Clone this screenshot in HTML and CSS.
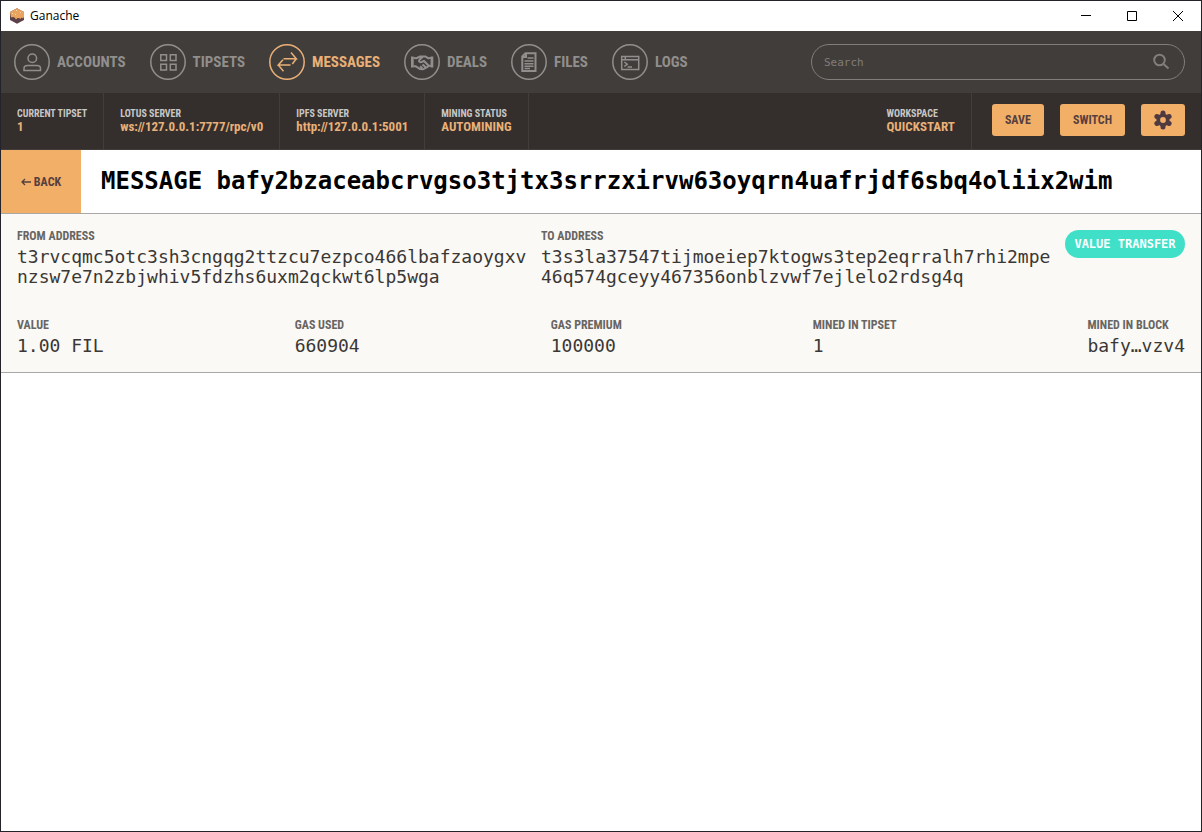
FILE: index.html
```html
<!DOCTYPE html>
<html lang="en">
<head>
<meta charset="utf-8">
<meta name="viewport" content="width=device-width, initial-scale=1">
<title>Ganache</title>
<link rel="stylesheet" href="styles.css">
</head>
<body>
<div class="window">
  <header class="titlebar">
    <svg class="app-icon" viewBox="0 0 16 16" aria-hidden="true">
      <path fill="#5b4048" d="M1 4 8 .3l7 3.700v8l-7 3.700-7-3.700z"/>
      <path fill="#e9a45f" d="M1 4 8 .3l7 3.700v5l-1 1.500-1.500-1-1 1.500-1.500-1-1.500 0-1.500 1.500-1.500-2-1.500-.5-2 .5z"/>
      <path fill="#f8d9b0" d="M3 5h1v1H3zM6 6h1v1H6zM11 4h1v1h-1zM7 2h1v1H7z"/>
    </svg>
    <span class="app-name">Ganache</span>
    <div class="window-controls">
      <button type="button" aria-label="Minimize"><svg viewBox="0 0 12 12"><path d="M1 5.500h10"/></svg></button>
      <button type="button" aria-label="Maximize"><svg viewBox="0 0 12 12"><path d="M1.500 1.500h9v9h-9z"/></svg></button>
      <button type="button" aria-label="Close"><svg viewBox="0 0 12 12"><path d="m1 1 10 10M11 1 1 11"/></svg></button>
    </div>
  </header>

  <div class="navbar">
    <nav class="nav">
      <a class="nav-item" href="#accounts">
        <svg viewBox="0 0 36 36"><circle cx="18" cy="18" r="17.200"/><circle cx="18.300" cy="14.300" r="4.300"/><path d="M10 26.500v-2c0-2 1.500-3 3.500-3h9.500c2 0 3.500 1 3.500 3v2z"/></svg>
        <span>ACCOUNTS</span></a>
      <a class="nav-item" href="#tipsets">
        <svg viewBox="0 0 36 36"><circle cx="18" cy="18" r="17.200"/><path d="M10.800 10.800h5.700v5.700h-5.700zM20.300 10.800H26v5.700h-5.700zM10.800 20.300h5.700V26h-5.700zM20.300 20.300H26V26h-5.700z"/></svg>
        <span>TIPSETS</span></a>
      <a class="nav-item active" href="#messages" aria-current="page">
        <svg viewBox="0 0 36 36"><circle cx="18" cy="18" r="17.200"/><path d="M14.500 14.700h12.800L22 8.500M27.300 14.700l-4 5.300M21.500 21H9.300l4.700-5.300M9.300 21l5.200 6.200"/></svg>
        <span>MESSAGES</span></a>
      <a class="nav-item" href="#deals">
        <svg viewBox="0 0 36 36"><circle cx="18" cy="18" r="17.200"/><path class="bold" d="m9.500 14 3 .2 3.500-1.700h5.500l2.500 1.700 3-.2M9.500 22l2.500.5 4 2.500 3 .3 4.500-2.300 1.500-1.500 2 .5M18.500 13l-3 2.800c-1.200 1.500 0 2.700 2 2.200l2.500-1 4.500 4.500M16 22.300l2.500 1.700M18.500 20.500l3 2.500"/><path class="fill" d="M7 12.500h2.700v11H7zM26.600 12.500h2.700v11h-2.700z"/></svg>
        <span>DEALS</span></a>
      <a class="nav-item" href="#files">
        <svg viewBox="0 0 36 36"><circle cx="18" cy="18" r="17.200"/><path class="bold" d="M14.500 9.300h10v17.700H11.300V12.500zM11.300 13h3.700V9.300"/><path d="M16.500 14h6M13.500 17h9M13.500 19.700h9M13.500 22.200h9M13.500 24.600h5.500"/></svg>
        <span>FILES</span></a>
      <a class="nav-item" href="#logs">
        <svg viewBox="0 0 36 36"><circle cx="18" cy="18" r="17.200"/><path d="M9.700 12.500h17v13h-17zM9.700 15.700h17M13.300 12.500v3M12.300 18l3 2.200-3 2.300M15.500 23h4.500"/></svg>
        <span>LOGS</span></a>
    </nav>
    <form class="search" role="search">
      <input type="text" placeholder="Search" aria-label="Search">
      <button type="submit" aria-label="Submit search"><svg viewBox="0 0 18 18"><circle cx="7.500" cy="7" r="5.300"/><path d="m11.500 11 5 4.500"/></svg></button>
    </form>
  </div>

  <div class="statusbar">
    <dl class="status-list">
      <div class="status"><dt>CURRENT TIPSET</dt><dd>1</dd></div>
      <div class="status"><dt>LOTUS SERVER</dt><dd>ws://127.0.0.1:7777/rpc/v0</dd></div>
      <div class="status"><dt>IPFS SERVER</dt><dd>http://127.0.0.1:5001</dd></div>
      <div class="status"><dt>MINING STATUS</dt><dd>AUTOMINING</dd></div>
      <div class="status workspace"><dt>WORKSPACE</dt><dd>QUICKSTART</dd></div>
    </dl>
    <div class="actions">
      <button type="button">SAVE</button>
      <button type="button">SWITCH</button>
      <button type="button" aria-label="Settings"><svg viewBox="0 0 18 18"><g><circle cx="9" cy="9" r="5"/><path d="M9 2v14M2.900 5.500l12.200 7M15.100 5.500l-12.200 7"/></g><circle class="hole" cx="9" cy="9" r="2.900"/></svg></button>
    </div>
  </div>

  <main>
    <div class="heading">
      <button type="button" class="back"><svg viewBox="0 0 10 10" aria-hidden="true"><path d="M10 5H1M4 2 1 5l3 3"/></svg>BACK</button>
      <h1>MESSAGE bafy2bzaceabcrvgso3tjtx3srrzxirvw63oyqrn4uafrjdf6sbq4oliix2wim</h1>
    </div>
    <section class="details">
      <dl class="row addresses">
        <div class="field"><dt>FROM ADDRESS</dt><dd>t3rvcqmc5otc3sh3cngqg2ttzcu7ezpco466lbafzaoygxvnzsw7e7n2zbjwhiv5fdzhs6uxm2qckwt6lp5wga</dd></div>
        <div class="field"><dt>TO ADDRESS</dt><dd>t3s3la37547tijmoeiep7ktogws3tep2eqrralh7rhi2mpe46q574gceyy467356onblzvwf7ejlelo2rdsg4q</dd></div>
        <div class="badge">VALUE TRANSFER</div>
      </dl>
      <dl class="row values">
        <div class="field"><dt>VALUE</dt><dd>1.00 FIL</dd></div>
        <div class="field"><dt>GAS USED</dt><dd>660904</dd></div>
        <div class="field"><dt>GAS PREMIUM</dt><dd>100000</dd></div>
        <div class="field"><dt>MINED IN TIPSET</dt><dd>1</dd></div>
        <div class="field"><dt>MINED IN BLOCK</dt><dd>bafy…vzv4</dd></div>
      </dl>
    </section>
  </main>
</div>
</body>
</html>
```
FILE: styles.css
```css
* { box-sizing: border-box; }

body {
  margin: 0;
  background: #fff;
  font-family: "Roboto Condensed", Roboto, sans-serif;
}

dl, dd, h1 { margin: 0; }

button {
  border: 0;
  padding: 0;
  background: none;
  font: inherit;
  color: inherit;
}

.window {
  min-height: 100vh;
  border: 1px solid #242329;
}

.titlebar {
  display: flex;
  align-items: center;
  height: 30px;
  padding-left: 8px;
  font: 12px/16px "Open Sans", "Noto Sans", sans-serif;
  color: #000;
}

.app-icon { width: 16px; height: 16px; margin-right: 5px; }

.window-controls { display: flex; margin-left: auto; }

.window-controls button {
  display: grid;
  place-items: center;
  width: 46px;
  height: 28px;
}

.window-controls svg {
  width: 12px;
  height: 12px;
  fill: none;
  stroke: #000;
}

.navbar {
  display: flex;
  align-items: center;
  justify-content: space-between;
  gap: 24px;
  height: 62px;
  padding: 0 16px 0 13px;
  background: #413d3a;
}

.nav { display: flex; gap: 24px; }

.nav-item {
  display: flex;
  align-items: center;
  gap: 7px;
  color: #918f8d;
  font-size: 15px;
  font-weight: 700;
  text-decoration: none;
}

.nav-item svg {
  width: 36px;
  height: 36px;
  fill: none;
  stroke: currentColor;
  stroke-width: 1.5;
}

.nav-item .bold { stroke-width: 2; }
.nav-item .fill { fill: currentColor; stroke: none; }
.nav-item.active { color: #e9b078; }

.search {
  display: flex;
  align-items: center;
  flex: 0 1 374px;
  height: 36px;
  padding: 0 14px 0 12px;
  border: 1px solid #817e7b;
  border-radius: 18px;
  color: #817e7b;
}

.search input {
  flex: 1;
  min-width: 0;
  border: 0;
  padding: 0;
  outline: 0;
  background: none;
  color: inherit;
  font: 11px "DejaVu Sans Mono", monospace;
}

.search input::placeholder { color: inherit; opacity: 1; }

.search svg {
  display: block;
  width: 18px;
  height: 18px;
  fill: none;
  stroke: currentColor;
  stroke-width: 2;
}

.statusbar {
  display: flex;
  height: 57px;
  padding-right: 16px;
  border-bottom: 1px solid #413d3a;
  background: #342f2d;
}

.status-list { display: flex; flex: 1; }

.status {
  display: flex;
  flex-direction: column;
  justify-content: center;
  padding: 0 16px 2px;
  border-right: 1px solid #413d3a;
  font-weight: 700;
}

.status dt { font-size: 10px; line-height: 12px; color: #c9c7c5; }
.status dd { font-size: 13px; line-height: 13px; color: #e9b078; }
.workspace { margin-left: auto; }

.actions {
  display: flex;
  align-items: center;
  gap: 16px;
  padding: 0 0 2px 20px;
}

.actions button {
  display: grid;
  place-items: center;
  height: 32px;
  padding: 0 13px;
  border-radius: 3px;
  background: #f2af67;
  color: #56403f;
  font-size: 12px;
  font-weight: 700;
}

.actions svg {
  width: 18px;
  height: 18px;
  overflow: visible;
  fill: #4f3a40;
  stroke: #4f3a40;
  stroke-width: 5;
  stroke-linecap: round;
}

.actions g circle { stroke-width: 3; }
.actions .hole { fill: #f2af67; stroke: none; }

.heading {
  display: flex;
  height: 64px;
  border-bottom: 1px solid #a9a8a7;
}

.back {
  display: flex;
  align-items: center;
  justify-content: center;
  gap: 3px;
  width: 80px;
  background: #f2af67;
  color: #56403f;
  font-size: 12px;
  font-weight: 700;
}

.back svg {
  width: 10px;
  height: 10px;
  fill: none;
  stroke: currentColor;
  stroke-width: 1.3;
}

h1 {
  padding-left: 20px;
  font: 700 24px/62px "DejaVu Sans Mono", monospace;
  color: #000;
}

.details {
  padding: 14px 16px 16px;
  border-bottom: 1px solid #a9a8a7;
  background: #faf9f5;
}

.row { display: flex; }
.addresses { gap: 14px; margin-bottom: 30px; }
.addresses .field { flex: 1; min-width: 0; }
.values { justify-content: space-between; }

.field dt {
  font-size: 12px;
  font-weight: 700;
  line-height: 16px;
  margin-bottom: 3px;
  color: #686562;
}

.field dd {
  font: 18px/20px "DejaVu Sans Mono", monospace;
  color: #3b3735;
  word-break: break-all;
}

.badge {
  flex: 0 0 120px;
  height: 28px;
  margin-top: 2px;
  border-radius: 14px;
  background: #40e0c8;
  color: #fff;
  font: 700 12px/28px "DejaVu Sans Mono", monospace;
  text-align: center;
}
```
